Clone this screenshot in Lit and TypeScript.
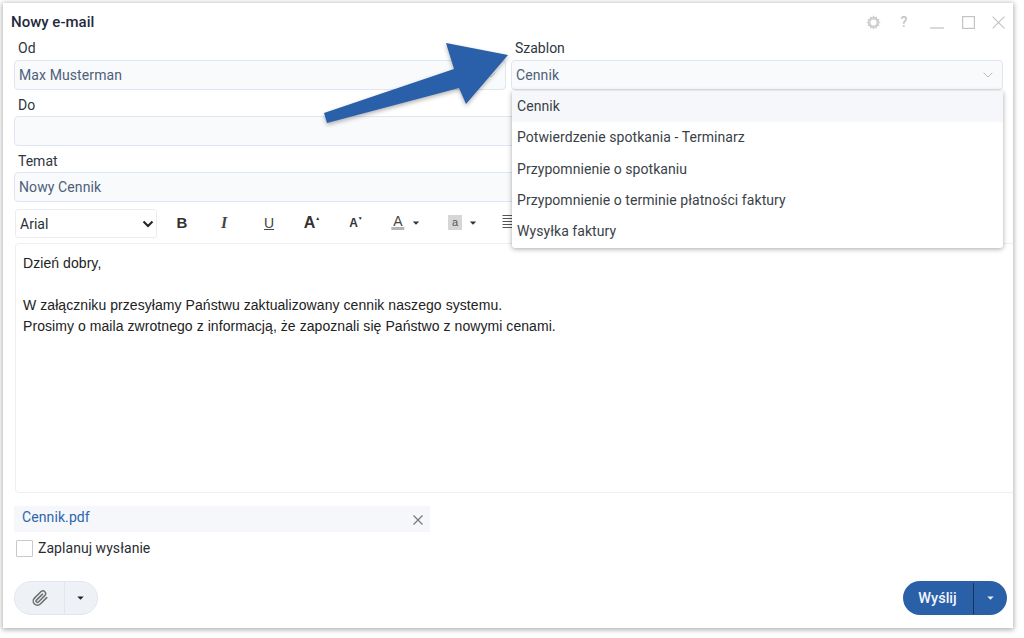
import { LitElement, html, css, svg } from "lit";
import { customElement } from "lit/decorators.js";

const caret = (c: string) => html`<svg class="caret" width="7" height="4" viewBox="0 0 8 5"><path d="M0 0.5h8L4 4.8z" fill="${c}"/></svg>`;
const chevron = (c: string) => html`<svg class="chev" width="10" height="6" viewBox="0 0 10 6"><path d="M.7.8 5 5 9.3.8" fill="none" stroke="${c}" stroke-width="1"/></svg>`;
const gear = svg`<path d="M7.5 .8l1.2 2 2.2-.8.3 2.3 2.3.3-.8 2.2 2 1.2-2 1.2.8 2.2-2.3.3-.3 2.3-2.2-.8-1.2 2-1.2-2-2.2.8-.3-2.3-2.3-.3.8-2.2-2-1.2 2-1.2-.8-2.2 2.3-.3.3-2.3 2.2.8z" fill="#d0d0d0" transform="translate(0 -.5)"/><circle cx="7.5" cy="7.5" r="3" fill="#fff"/>`;

@customElement("app-root")
export class AppRoot extends LitElement {
  static styles = css`
    :host { display: block; width: 1024px; height: 638px; box-sizing: border-box; padding: 3px 11px 10px 3px; background: #fff; position: relative; font-family: Roboto, "Liberation Sans", sans-serif; overflow: hidden; }
    * { box-sizing: border-box; }
    .win { height: 625px; background: #fff; display: flex; flex-direction: column; padding-left: 11px; box-shadow: 0 1px 5px 1px rgba(0,0,0,.3); position: relative; }
    .head { height: 35px; flex: none; display: flex; align-items: center; justify-content: space-between; padding: 3px 8px 0 0; }
    .title { font-size: 15px; font-weight: 500; color: #1f2a3c; margin-left: -3px; }
    .ctrl { display: flex; align-items: center; gap: 0; }
    .ctrl svg { display: block; }
    .ctrl .q { font-size: 14px; color: #c4c4c4; width: 12px; text-align: center; font-weight: 500; }
    .form { display: grid; grid-template-columns: 492px 492px; column-gap: 5px; row-gap: 4px; width: 989px; }
    .span { grid-column: 1 / 3; }
    label { display: block; height: 20px; line-height: 20px; margin-bottom: 2px; padding-left: 4px; font-size: 14px; color: #2f3640; }
    .span label { line-height: 22px; }
    .input { height: 30px; background: #f8fafc; border: 1px solid #dfe6f1; border-radius: 4px; display: flex; align-items: center; justify-content: space-between; padding: 0 9px 0 4px; font-size: 14px; color: #4d6079; letter-spacing: .1px; }
    .toolbar { display: flex; align-items: center; height: 29px; margin: 7px 0 0 1px; position: relative; }
    .font { width: 142px; height: 29px; border: 1px solid #e9edf3; border-radius: 3px; display: flex; align-items: center; justify-content: space-between; padding: 0 2px 0 4px; font-size: 14px; color: #2b2f36; flex: none; }
    .tools { display: flex; align-items: center; position: relative; height: 29px; flex: 1; }
    .t { position: absolute; top: -1px; height: 29px; display: flex; align-items: center; justify-content: center; color: #333; transform: translateX(-50%); font-family: "Liberation Sans", sans-serif; }
    .b { font-weight: 700; font-size: 15px; }
    .i { font-style: italic; font-weight: 700; font-family: "Liberation Serif", serif; font-size: 16px; color: #444; }
    .u { font-size: 14px; text-decoration: underline; color: #444; }
    .ap { font-weight: 700; font-size: 16px; }
    .am { font-weight: 700; font-size: 12px; }
    .sup { font-size: 5px; align-self: center; margin: -10px 0 0 0; }
    .acol { border-bottom: 3px solid #b4b4b4; line-height: 12px; height: 15px; font-size: 14px; padding: 0 2px; color: #444; }
    .ahl { background: #d6d6d6; width: 14px; height: 15px; line-height: 15px; text-align: center; font-size: 11px; color: #555; }
    .lines { width: 11px; height: 15px; background: repeating-linear-gradient(#555 0 1px, transparent 1px 3px); }
    .editor { flex: none; height: 250px; margin: 5px 0 0 1px; width: 998px; border: 1px solid #ecf0f6; border-right: none; border-radius: 4px 0 0 4px; padding: 9px 7px; font-family: "Liberation Sans", Arial, sans-serif; font-size: 14px; line-height: 21px; color: #222; letter-spacing: .065px; }
    .editor p { margin: 0; height: 21px; white-space: pre; }
    .attach { width: 416px; height: 26px; margin-top: 13px; background: #f6f7fa; display: flex; align-items: center; justify-content: space-between; padding: 0 7px 4px 8px; font-size: 14px; color: #2e65ad; flex: none; letter-spacing: .1px; }
    .attach svg { margin-top: 5px; }
    .check { display: flex; align-items: center; gap: 5px; margin: 7px 0 0 3px; font-size: 14px; color: #2a2d33; height: 18px; flex: none; letter-spacing: .05px; }
    .box { width: 17px; height: 17px; border: 1px solid #c9c9c9; background: #fff; border-radius: 1px; margin-left: -1px; }
    .bottom { display: flex; justify-content: space-between; align-items: center; margin-top: 24px; padding-right: 6px; }
    .grp { width: 84px; height: 34px; border: 1px solid #e1e7f2; border-radius: 17px; background: #eef1f6; display: flex; align-items: center; overflow: hidden; }
    .grp .l { width: 50px; height: 100%; display: flex; align-items: center; justify-content: center; border-right: 1px solid #e1e7f2; }
    .grp .r { flex: 1; display: flex; justify-content: center; padding-right: 2px; }
    .send { width: 104px; height: 34px; border-radius: 17px; background: #2a60a8; display: flex; align-items: center; color: #f2f6fc; font-size: 14.5px; font-weight: 500; }
    .send .l { width: 71px; height: 31px; display: flex; align-items: center; justify-content: center; border-right: 1px solid #17325f; padding-right: 1px; }
    .send .r { flex: 1; display: flex; justify-content: center; }
    .menu { position: absolute; left: 509px; top: 88px; width: 491px; height: 157px; background: #fff; box-shadow: 0 1px 5px rgba(0,0,0,.35); border-radius: 0 0 3px 3px; z-index: 2; font-size: 14px; color: #3a3f47; letter-spacing: .06px; }
    .menu div { height: 31.3px; line-height: 30px; padding-left: 5px; }
    .menu .on { background: #f5f7fa; }
    .arrow { position: absolute; left: 0; top: 0; z-index: 3; pointer-events: none; filter: drop-shadow(0 2px 2px rgba(0,0,0,.3)); }
  `;

  render() {
    return html`
      <div class="win">
        <div class="head">
          <div class="title">Nowy e-mail</div>
          <div class="ctrl">
            <svg width="15" height="15" viewBox="0 0 15 15" style="margin-right:17px">${gear}</svg>
            <span class="q">?</span>
            <svg width="14" height="14" viewBox="0 0 14 14" style="margin-left:20px"><path d="M0 13h14" stroke="#c4c4c4" stroke-width="1.3"/></svg>
            <svg width="13" height="13" viewBox="0 0 13 13" style="margin-left:18px"><rect x=".6" y=".6" width="11.8" height="11.8" fill="none" stroke="#c4c4c4" stroke-width="1.2"/></svg>
            <svg width="13" height="13" viewBox="0 0 13 13" style="margin-left:17px"><path d="M.6.6l11.8 11.8M12.4.6.6 12.4" stroke="#c4c4c4" stroke-width="1.2"/></svg>
          </div>
        </div>
        <div class="form">
          <div><label>Od</label><div class="input"><span>Max Musterman</span>${chevron("#cbd2dc")}</div></div>
          <div class="szab"><label>Szablon</label><div class="input"><span>Cennik</span>${chevron("#b4bcc8")}</div></div>
          <div class="span"><label>Do</label><div class="input"></div></div>
          <div class="span"><label>Temat</label><div class="input"><span>Nowy Cennik</span></div></div>
        </div>
        <div class="toolbar">
          <div class="font"><span>Arial</span><svg width="12" height="8" viewBox="0 0 12 8"><path d="M1.5 1.5 6 6l4.5-4.5" fill="none" stroke="#222" stroke-width="2"/></svg></div>
          <div class="tools">
            <span class="t b" style="left:25px">B</span>
            <span class="t i" style="left:67px">I</span>
            <span class="t u" style="left:112px">U</span>
            <span class="t ap" style="left:155px">A<span class="sup">▲</span></span>
            <span class="t am" style="left:199px">A<span class="sup">▼</span></span>
            <span class="t" style="left:241px"><span class="acol">A</span></span>
            <span class="t" style="left:259px">${caret("#333")}</span>
            <span class="t" style="left:298px"><span class="ahl">a</span></span>
            <span class="t" style="left:316px">${caret("#333")}</span>
            <span class="t" style="left:351px"><span class="lines"></span></span>
          </div>
        </div>
        <div class="editor">
          <p>Dzień dobry,</p>
          <p></p>
          <p>W załączniku przesyłamy Państwu zaktualizowany cennik naszego systemu.</p>
          <p>Prosimy o maila zwrotnego z informacją, że zapoznali się Państwo z nowymi cenami.</p>
        </div>
        <div class="attach"><span>Cennik.pdf</span><svg width="10" height="10" viewBox="0 0 10 10"><path d="M.5.5l9 9M9.5.5l-9 9" stroke="#777" stroke-width="1.2"/></svg></div>
        <div class="check"><span class="box"></span><span>Zaplanuj wysłanie</span></div>
        <div class="bottom">
          <div class="grp">
            <div class="l"><svg width="18" height="18" viewBox="0 0 24 24"><path d="M21 11.5 12.4 20a5.5 5.5 0 0 1-7.8-7.8l8.9-8.9a3.7 3.7 0 0 1 5.2 5.2L9.9 17.4a1.8 1.8 0 0 1-2.6-2.6l8.1-8" fill="none" stroke="#6f6f6f" stroke-width="2" stroke-linecap="round" stroke-linejoin="round"/></svg></div>
            <div class="r">${caret("#222")}</div>
          </div>
          <div class="send"><div class="l">Wyślij</div><div class="r">${caret("#e8eef8")}</div></div>
        </div>
        <div class="menu">
          <div class="on">Cennik</div>
          <div>Potwierdzenie spotkania - Terminarz</div>
          <div>Przypomnienie o spotkaniu</div>
          <div>Przypomnienie o terminie płatności faktury</div>
          <div>Wysyłka faktury</div>
        </div>
      </div>
      <svg class="arrow" width="1024" height="200" viewBox="0 0 1024 200"><polygon points="324,113 454,69 446,43 508,55 466,104 459,88 327,123" fill="#2a5fa9"/></svg>
    `;
  }
}
